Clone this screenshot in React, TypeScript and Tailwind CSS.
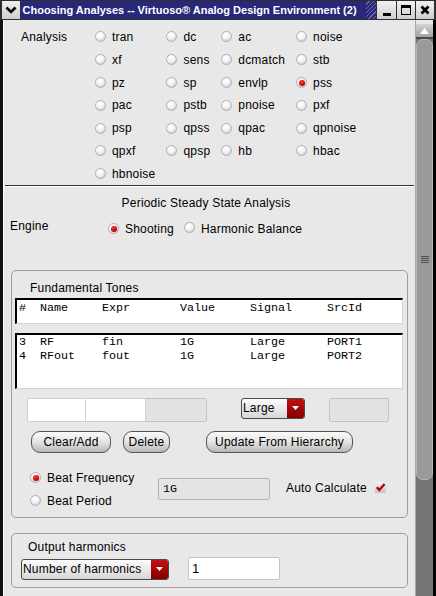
import React from "react";

// rows of the analysis picker, read left to right
const analyses = [
  ["tran", "dc", "ac", "noise"],
  ["xf", "sens", "dcmatch", "stb"],
  ["pz", "sp", "envlp", "pss"],
  ["pac", "pstb", "pnoise", "pxf"],
  ["psp", "qpss", "qpac", "qpnoise"],
  ["qpxf", "qpsp", "hb", "hbac"],
  ["hbnoise"],
].flat();

const header = ["#", "Name", "Expr", "Value", "Signal", "SrcId"];

const tones = [
  ["3", "RF", "fin", "1G", "Large", "PORT1"],
  ["4", "RFout", "fout", "1G", "Large", "PORT2"],
];

function Radio({ on = false }: { on?: boolean }) {
  return (
    <span className="inline-flex h-[11px] w-[11px] shrink-0 items-center justify-center rounded-full border border-[#b0b0b0] bg-[radial-gradient(circle_at_40%_30%,#ffffff_0%,#f4f4f4_45%,#bcbcbc_100%)]">
      {on && (
        <span className="h-[6px] w-[6px] rounded-full bg-[radial-gradient(circle_at_40%_35%,#ff4040,#c80000_60%,#7a0000)]" />
      )}
    </span>
  );
}

function Dropdown({ label, width }: { label: string; width: string }) {
  return (
    <div
      className={`flex h-[21px] overflow-hidden rounded-[3px] border border-[#4a4a4a] bg-gradient-to-b from-[#fdfdfd] to-[#d6d6d6] ${width}`}
    >
      <span className="flex flex-1 items-center pl-[1px]">{label}</span>
      <span className="flex w-[17px] items-center justify-center bg-gradient-to-b from-[#c41010] to-[#860000]">
        <svg width="7" height="4" viewBox="0 0 7 4">
          <path d="M0 0 L7 0 L3.5 4Z" fill="#fff" />
        </svg>
      </span>
    </div>
  );
}

function Pill({ children, width }: { children: React.ReactNode; width: string }) {
  return (
    <button
      className={`h-[22px] rounded-[9px] border border-[#555] bg-gradient-to-b from-[#fbfbfb] via-[#e4e4e4] to-[#b8b8b8] text-[12px] tracking-[0.2px] ${width}`}
    >
      {children}
    </button>
  );
}

export default function App() {
  return (
    <div className="flex h-[596px] w-[436px] flex-col overflow-hidden bg-black font-['Liberation_Sans',Arial,sans-serif] text-[12px] tracking-[0.2px] text-black">
      {/* title bar */}
      <div className="flex h-[20px] shrink-0 gap-[1px] bg-[#2e2e2e] px-[2px] py-[1px]">
        <div className="flex w-[18px] items-center justify-center bg-gradient-to-b from-[#f0f0f0] to-[#cfcfcf]">
          <svg width="12" height="8" viewBox="0 0 12 8">
            <path d="M1.5 1.5 L6 6 L10.5 1.5" stroke="#000" strokeWidth="2.6" fill="none" />
          </svg>
        </div>
        <div className="flex flex-1 items-center bg-[#28287a] pl-[1.5px]">
          <span className="flex-1 whitespace-nowrap text-[11px] font-bold tracking-normal text-white">
            Choosing Analyses -- Virtuoso® Analog Design Environment (2)
          </span>
          <div className="h-full w-[10px] bg-[repeating-linear-gradient(135deg,#28287a_0px,#28287a_2px,#6a6aa8_2px,#6a6aa8_3px)]" />
        </div>
        <div className="flex w-[19px] items-end justify-center bg-gradient-to-b from-[#f0f0f0] to-[#cfcfcf] pb-[3px]">
          <div className="h-[3px] w-[8px] bg-black" />
        </div>
        <div className="flex w-[18px] items-center justify-center bg-gradient-to-b from-[#f0f0f0] to-[#cfcfcf]">
          <div className="h-[10px] w-[10px] border-[1.5px] border-t-[3px] border-black" />
        </div>
        <div className="flex w-[18px] items-center justify-center bg-gradient-to-b from-[#f0f0f0] to-[#cfcfcf]">
          <svg width="10" height="10" viewBox="0 0 10 10">
            <path d="M1.5 1.5 L8.5 8.5 M8.5 1.5 L1.5 8.5" stroke="#000" strokeWidth="2.8" />
          </svg>
        </div>
      </div>

      <div className="flex flex-1">
        <div className="w-[3px] bg-[#111]" />

        {/* form */}
        <div className="w-[412px] border-l border-white bg-[#e8e8e8]">
          <div className="flex pt-[5.6px]">
            <div className="flex h-[22.8px] w-[91px] items-center pl-[17px]">Analysis</div>
            <div className="grid auto-rows-[22.8px] grid-cols-[auto_auto_auto_auto] gap-x-[11px]">
              {analyses.map((a) => (
                <label key={a} className="flex items-center gap-[6px]">
                  <Radio on={a === "pss"} />
                  <span>{a}</span>
                </label>
              ))}
            </div>
          </div>

          <div className="mx-[1px] h-[1px] bg-[#333]" />
          <div className="mx-[1px] h-[1px] bg-white" />

          <div className="mt-[8px] h-[16px] pr-[7px] text-center leading-[16px]">
            Periodic Steady State Analysis
          </div>

          <div className="mt-[6.5px] flex">
            <div className="w-[104px] pl-[6px] leading-[16px]">Engine</div>
            <div className="mt-[3.3px] flex h-[16px] items-center">
              <Radio on />
              <span className="ml-[6px]">Shooting</span>
              <span className="ml-[10px]">
                <Radio />
              </span>
              <span className="ml-[6px]">Harmonic Balance</span>
            </div>
          </div>

          {/* fundamental tones */}
          <div className="mx-[7px] mt-[33px] rounded-[5px] border border-[#9e9e9e] pb-[4.5px]">
            <div className="pl-[18px] pt-[9px] leading-[16px]">Fundamental Tones</div>

            <div className="ml-[3px] mr-[4px] mt-[2px] h-[26px] border-b border-l-2 border-r border-t-2 border-b-[#d4d4d4] border-l-black border-r-[#d4d4d4] border-t-black bg-white pl-[2px] pt-[1px]">
              <div className="grid grid-cols-[21px_62px_78px_70px_77px_1fr] font-['Liberation_Mono',monospace] text-[11.7px] leading-[14px] tracking-normal">
                {header.map((h) => (
                  <span key={h}>{h}</span>
                ))}
              </div>
            </div>

            <div className="ml-[3px] mr-[4px] mt-[9px] h-[56px] border-b border-l-2 border-r border-t-2 border-b-[#d4d4d4] border-l-black border-r-[#d4d4d4] border-t-black bg-white pl-[2px]">
              {tones.map((row) => (
                <div
                  key={row[0]}
                  className="grid grid-cols-[21px_62px_78px_70px_77px_1fr] font-['Liberation_Mono',monospace] text-[11.7px] leading-[14px] tracking-normal"
                >
                  {row.map((c, i) => (
                    <span key={i}>{c}</span>
                  ))}
                </div>
              ))}
            </div>

            <div className="mt-[9px] flex h-[24px] items-start pl-[15px]">
              <div className="h-[24px] w-[59px] rounded-l-[2px] border border-[#cfcfcf] bg-white" />
              <div className="h-[24px] w-[60px] border border-l-0 border-[#cfcfcf] bg-white" />
              <div className="h-[24px] w-[61px] rounded-r-[2px] border border-l-0 border-[#c4c4c4] bg-[#e2e2e2]" />
              <div className="ml-[34px]">
                <Dropdown label="Large" width="w-[64px]" />
              </div>
              <div className="ml-[24px] h-[24px] w-[60px] rounded-[2px] border border-[#c4c4c4] bg-[#e2e2e2]" />
            </div>

            <div className="mt-[9px] flex pl-[19px]">
              <Pill width="w-[80px]">Clear/Add</Pill>
              <div className="ml-[12px]">
                <Pill width="w-[47px]">Delete</Pill>
              </div>
              <div className="ml-[36px]">
                <Pill width="w-[147px]">Update From Hierarchy</Pill>
              </div>
            </div>

            <div className="mt-[13.5px] flex pl-[18px]">
              <div className="w-[128px]">
                <div className="flex h-[23px] items-center gap-[6px]">
                  <Radio on />
                  <span>Beat Frequency</span>
                </div>
                <div className="flex h-[23px] items-center gap-[6px]">
                  <Radio />
                  <span>Beat Period</span>
                </div>
              </div>
              <div className="mt-[11.5px] h-[22px] w-[112px] rounded-[2px] border border-[#b4b4b4] bg-[#e4e4e4] pl-[4px] font-['Liberation_Mono',monospace] text-[11.7px] leading-[20px] tracking-normal">
                1G
              </div>
              <div className="ml-[16px] mt-[13.5px] flex h-[16px] items-center gap-[8px]">
                <span>Auto Calculate</span>
                <span className="flex h-[11px] w-[11px] items-center justify-center bg-gradient-to-b from-[#f4f4f4] to-[#c4c4c4]">
                  <svg width="11" height="11" viewBox="0 0 11 11">
                    <path d="M1.8 5.2 L4.3 8 L9.6 2" stroke="#c00000" strokeWidth="2.4" fill="none" />
                  </svg>
                </span>
              </div>
            </div>
          </div>

          {/* output harmonics */}
          <div className="mx-[7px] mt-[15px] rounded-[5px] border border-[#9e9e9e] pb-[7px]">
            <div className="pl-[16px] pt-[4.7px] leading-[16px]">Output harmonics</div>
            <div className="mt-[2.3px] flex items-start pl-[9px]">
              <div className="mt-[2px]">
                <Dropdown label="Number of harmonics" width="w-[148px]" />
              </div>
              <div className="ml-[19px] flex h-[23px] w-[92px] items-center rounded-[2px] border border-[#c4c4c4] bg-white pl-[3px] text-[13px]">
                1
              </div>
            </div>
          </div>
        </div>

        {/* scrollbar */}
        <div className="flex w-[18px] flex-col border-l border-[#a8a8a8] bg-[#767676]">
          <div className="h-[4px] bg-[#e8e8e8]" />
          <div className="flex h-[13px] items-center justify-center bg-gradient-to-b from-[#d4d4d4] to-[#a2a2a2]">
            <svg width="9" height="6" viewBox="0 0 9 6">
              <path d="M0 6 L4.5 0 L9 6Z" fill="#fff" />
            </svg>
          </div>
          <div className="h-[2px] bg-[#4a4a4a]" />
          <div className="flex h-[441px] items-center justify-center rounded-[7px] border border-[#b8b8b8] bg-[#9a9a9a]">
            <div className="flex flex-col gap-[1px]">
              <div className="h-[1px] w-[8px] bg-[#505050]" />
              <div className="h-[1px] w-[8px] bg-[#505050]" />
              <div className="h-[1px] w-[8px] bg-[#505050]" />
              <div className="h-[1px] w-[8px] bg-[#505050]" />
            </div>
          </div>
        </div>

        <div className="w-[3px] bg-black" />
      </div>
    </div>
  );
}
